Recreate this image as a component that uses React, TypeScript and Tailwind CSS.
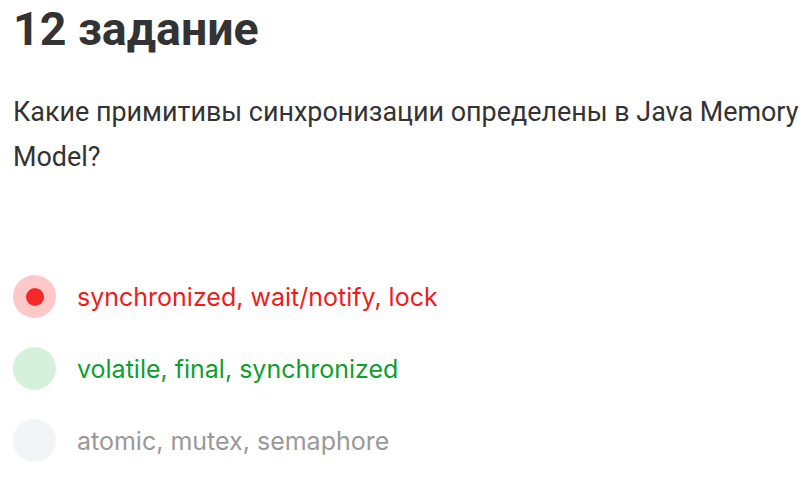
const options = [
  { text: "synchronized, wait/notify, lock", state: "wrong" },
  { text: "volatile, final, synchronized", state: "right" },
  { text: "atomic, mutex, semaphore", state: "none" },
];

export default function App() {
  return (
    <div className="w-[805px] h-[481px] bg-white pl-[13px] pt-[3px] font-['Roboto',sans-serif]">
      <h1 className="text-[46.5px] leading-[52px] font-bold text-[#333333]">12 задание</h1>
      <p className="mt-[35px] w-[792px] text-[26.9px] leading-[45px] text-[#333333]">
        Какие примитивы синхронизации определены в Java Memory Model?
      </p>
      <div className="mt-[95px] flex flex-col gap-[29px]">
        {options.map((o) => (
          <div key={o.text} className="flex items-center gap-[21px]">
            <div
              className={
                o.state === "wrong"
                  ? "w-[43px] h-[43px] rounded-full bg-[#fdc8c8] flex items-center justify-center"
                  : o.state === "right"
                  ? "w-[43px] h-[43px] rounded-full bg-[#d5f1dc]"
                  : "w-[43px] h-[43px] rounded-full bg-[#f3f4f8]"
              }
            >
              {o.state === "wrong" && <div className="w-[18px] h-[18px] rounded-full bg-[#f42828]" />}
            </div>
            <span
              className={
                o.state === "wrong"
                  ? "text-[25px] leading-[32px] font-['Inter',sans-serif] text-[#ee1c1c]"
                  : o.state === "right"
                  ? "text-[25px] leading-[32px] font-['Inter',sans-serif] text-[#0f9e2f]"
                  : "text-[25px] leading-[32px] font-['Inter',sans-serif] text-[#999999]"
              }
            >
              {o.text}
            </span>
          </div>
        ))}
      </div>
    </div>
  );
}
